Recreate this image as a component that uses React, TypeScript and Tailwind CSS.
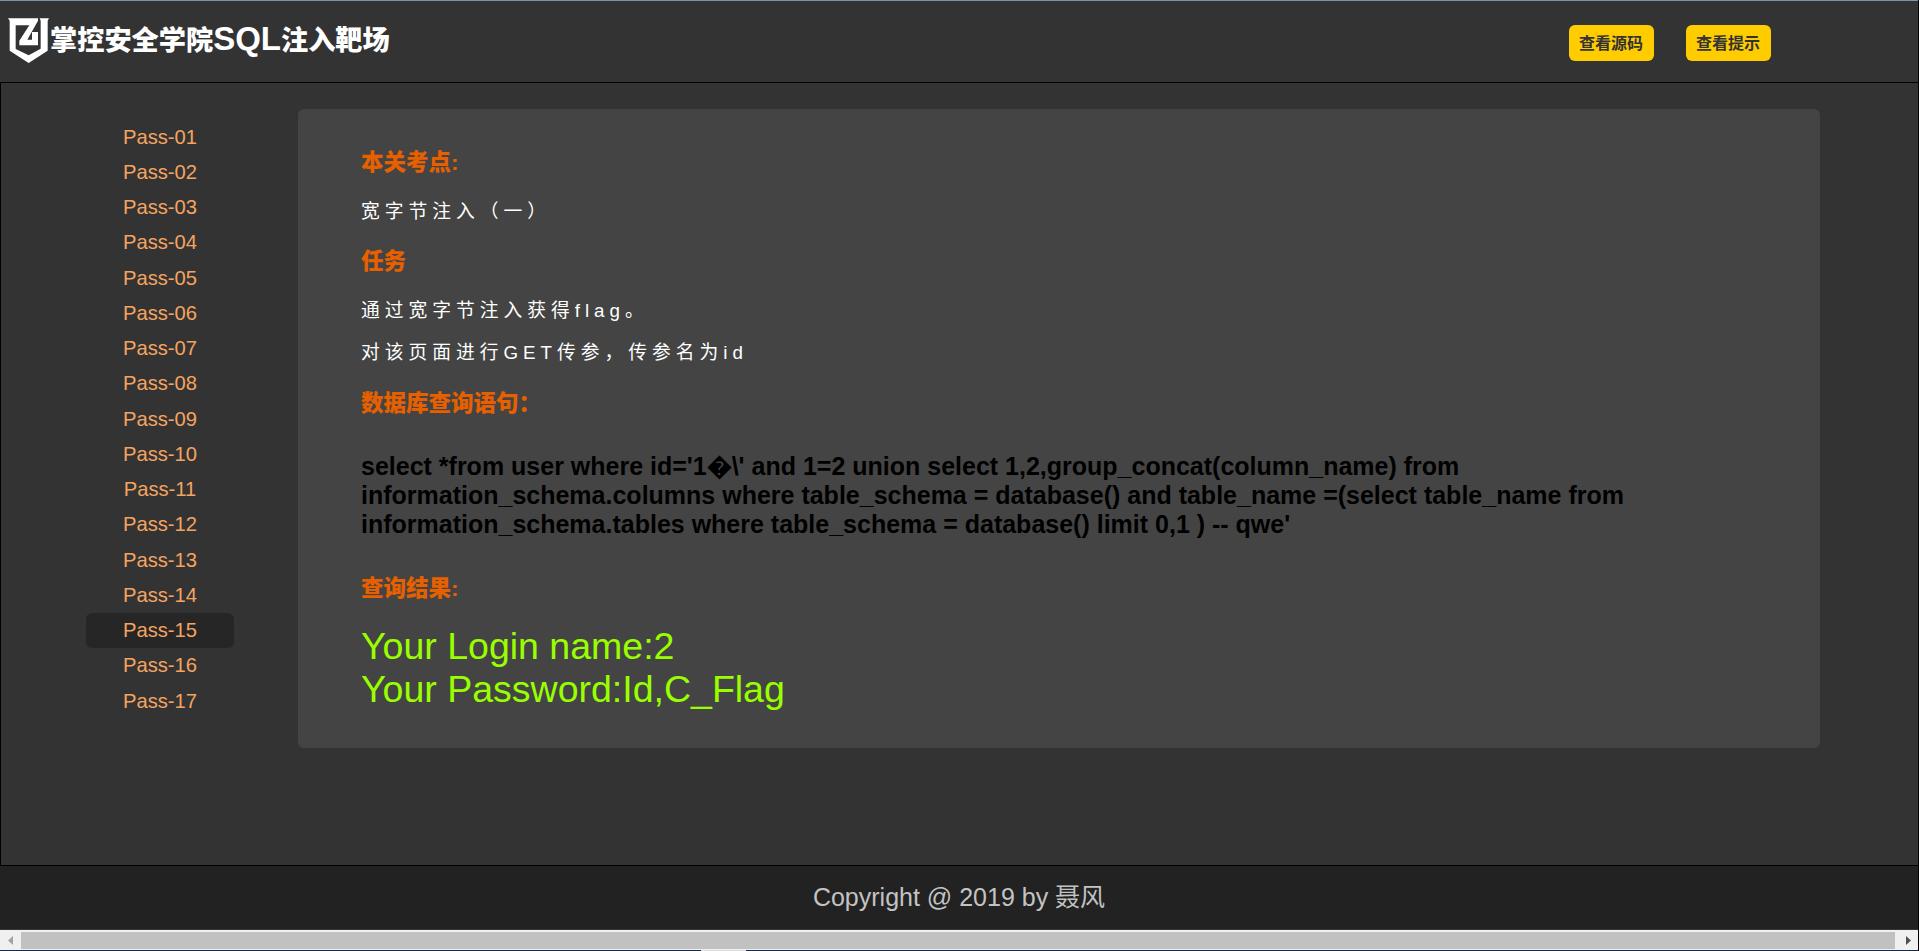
import { clsx } from 'clsx';

const passes = Array.from({ length: 17 }, (_, i) => `Pass-${String(i + 1).padStart(2, '0')}`);
const activePass = 'Pass-15';

const queryLines = [
  "select *from user where id='1\uFFFD\\' and 1=2 union select 1,2,group_concat(column_name) from",
  'information_schema.columns where table_schema = database() and table_name =(select table_name from',
  "information_schema.tables where table_schema = database() limit 0,1 ) -- qwe'",
];

const headingClass = 'text-[22.5px] leading-[30px] font-extrabold text-[#e66000]';
const textClass = 'text-[18.75px] leading-7 tracking-[5px] text-white';

function Logo() {
  return (
    <svg width="42" height="46" viewBox="0 0 126 138" fill="#fff" className="shrink-0">
      <path d="M0 1H90V8L58 65H72V42H90V82H34V68L64 22H23V93L62 112L98 92V8L95 1H123L119 8V98L62 135L5 98V8Z" />
    </svg>
  );
}

function Header() {
  return (
    <header className="flex h-[82px] shrink-0 justify-between border-t border-[#7896a5] pl-2">
      <div className="flex h-[46px] mt-[17px] items-center">
        <Logo />
        <h1 className="flex items-baseline text-[27.2px] leading-[38px] font-black text-white whitespace-nowrap pb-[3px]">
          掌控安全学院<span className="text-[33px] font-bold">SQL</span>注入靶场
        </h1>
      </div>
      <div className="flex gap-8 pt-6 pr-[147px]">
        {['查看源码', '查看提示'].map((label) => (
          <button key={label} className="h-9 w-[85px] rounded-md bg-[#ffcc00] pt-px pr-px text-base font-bold text-[#333]">
            {label}
          </button>
        ))}
      </div>
    </header>
  );
}

function Sidebar() {
  return (
    <ul className="mt-[36.5px] ml-[85px] w-[148px] shrink-0">
      {passes.map((pass) => (
        <li
          key={pass}
          className={clsx(
            'h-[35.25px] rounded-md text-center text-[20.2px] leading-[34.5px] text-[#f4a460]',
            pass === activePass && 'bg-[#262626]'
          )}
        >
          <a href="#">{pass}</a>
        </li>
      ))}
    </ul>
  );
}

function Content() {
  return (
    <section className="mt-[26px] ml-16 h-[639px] w-[1522px] rounded-md bg-[#444] pt-[39px] pl-[63px] whitespace-nowrap">
      <h3 className={headingClass}>本关考点:</h3>
      <p className={clsx(textClass, 'mt-5')}>宽字节注入（一）</p>
      <h3 className={clsx(headingClass, 'mt-[21px]')}>任务</h3>
      <p className={clsx(textClass, 'mt-5')}>通过宽字节注入获得flag。</p>
      <p className={clsx(textClass, 'mt-3.5')}>对该页面进行GET传参，传参名为id</p>
      <h3 className={clsx(headingClass, 'mt-[22px]')}>数据库查询语句：</h3>
      <div className="mt-[33px] text-[25px] leading-[29px] font-bold text-black">
        {queryLines.map((line) => (
          <p key={line}>{line}</p>
        ))}
      </div>
      <h3 className={clsx(headingClass, 'mt-[35px]')}>查询结果:</h3>
      <div className="mt-[21px] text-[37.5px] leading-[43px] text-[#99ff00]">
        <p>Your Login name:2</p>
        <p>Your Password:Id,C_Flag</p>
      </div>
    </section>
  );
}

function ScrollBar() {
  return (
    <div className="flex h-5 shrink-0 bg-[#f0f0f0] pt-0.5 pb-px">
      <div className="flex w-[21px] items-center justify-center">
        <svg width="5" height="9" viewBox="0 0 5 9" fill="#a3a3a3">
          <path d="M5 0V9L0 4.5Z" />
        </svg>
      </div>
      <div className="flex-1 bg-[#c1c1c1]" />
      <div className="flex w-[23px] items-center justify-center pl-1">
        <svg width="5" height="9" viewBox="0 0 5 9" fill="#505050">
          <path d="M0 0V9L5 4.5Z" />
        </svg>
      </div>
    </div>
  );
}

export default function App() {
  return (
    <div
      lang="zh-CN"
      className="flex h-[951px] w-[1919px] flex-col overflow-hidden border-r border-black bg-[#333] font-['Liberation_Sans','Noto_Sans_CJK_SC',sans-serif]"
    >
      <Header />
      <main className="flex h-[784px] shrink-0 items-start border-y border-l border-black">
        <Sidebar />
        <Content />
      </main>
      <footer className="h-16 shrink-0 border-b border-[#393435] bg-[#222] text-center text-[25px] leading-[63px] text-[#c3c3c3]">
        Copyright @ 2019 by 聂风
      </footer>
      <ScrollBar />
      <div className="h-px shrink-0 bg-[#1b2a41] pl-[701px]">
        <div className="h-px w-[45px] bg-[#dcdcdc]" />
      </div>
    </div>
  );
}
